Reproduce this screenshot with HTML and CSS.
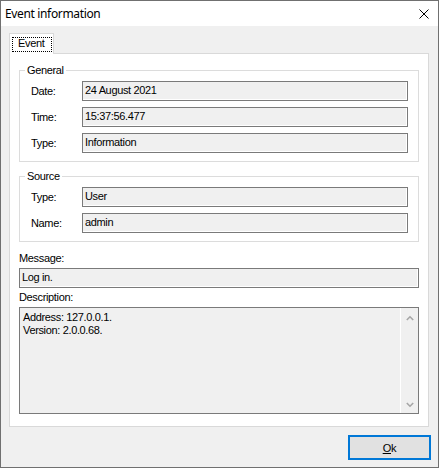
FILE: index.html
```html
<!DOCTYPE html>
<html>
<head>
<meta charset="utf-8">
<title>Event information</title>
<link rel="stylesheet" href="styles.css">
</head>
<body>
<div class="window">
  <div class="titlebar">
    <span class="title">Event information</span>
    <svg class="close" width="10" height="10" viewBox="0 0 10 10"><path d="M0.5 0.5 L9.5 9.5 M9.5 0.5 L0.5 9.5" stroke="#000" stroke-width="1" fill="none"/></svg>
  </div>
  <div class="client">
    <div class="tabs">
      <div class="tab"><span class="tab-label">Event</span></div>
    </div>
    <div class="tabpage">
      <fieldset class="group">
        <legend>General</legend>
        <div class="row"><span class="lbl">Date:</span><div class="field">24 August 2021</div></div>
        <div class="row"><span class="lbl">Time:</span><div class="field">15:37:56.477</div></div>
        <div class="row"><span class="lbl">Type:</span><div class="field">Information</div></div>
      </fieldset>
      <fieldset class="group source">
        <legend>Source</legend>
        <div class="row"><span class="lbl">Type:</span><div class="field">User</div></div>
        <div class="row"><span class="lbl">Name:</span><div class="field">admin</div></div>
      </fieldset>
      <div class="caption first">Message:</div>
      <div class="field wide">Log in.</div>
      <div class="caption">Description:</div>
      <div class="memo">
        <div class="memo-text">Address: 127.0.0.1.<br>Version: 2.0.0.68.</div>
        <div class="vscroll">
          <svg class="arrow" width="8" height="6" viewBox="0 0 8 6"><path d="M0.8 5 L4 1.8 L7.2 5" stroke="#a6a6a6" stroke-width="1.6" fill="none"/></svg>
          <svg class="arrow" width="8" height="6" viewBox="0 0 8 6"><path d="M0.8 1 L4 4.2 L7.2 1" stroke="#a6a6a6" stroke-width="1.6" fill="none"/></svg>
        </div>
      </div>
    </div>
    <div class="footer">
      <button class="btn"><u>O</u>k</button>
    </div>
  </div>
</div>
</body>
</html>
```
FILE: styles.css
```css
html, body {
  margin: 0;
  padding: 0;
  background: #ffffff;
}

body {
  font-family: "Liberation Sans", Arial, sans-serif;
  font-size: 11px;
  color: #000;
}

.window {
  width: 439px;
  height: 468px;
  box-sizing: border-box;
  border: 1px solid #707070;
  display: flex;
  flex-direction: column;
  background: #f0f0f0;
}

.titlebar {
  height: 25px;
  flex: none;
  background: #ffffff;
  display: flex;
  align-items: center;
  padding-left: 4px;
}

.title {
  font-family: "Noto Sans", "Open Sans", sans-serif;
  font-size: 12px;
  line-height: 16px;
  letter-spacing: -0.35px;
  color: #000;
}

.close {
  display: block;
  margin-left: auto;
  margin-right: 9px;
}

.client {
  flex: 1;
  display: flex;
  flex-direction: column;
  align-items: flex-start;
  padding: 7px 7px 0 8px;
  background: #f0f0f0;
}

.tabs {
  display: flex;
  height: 20px;
}

.tab {
  position: relative;
  z-index: 1;
  box-sizing: border-box;
  width: 45px;
  height: 21px;
  border: 1px solid #d9d9d9;
  border-bottom: 0;
  background: #ffffff;
  padding: 3px 0 0 2px;
}

.tab-label {
  display: block;
  box-sizing: border-box;
  width: 40px;
  height: 15px;
  border: 1px dotted #000;
  padding-left: 5px;
  line-height: 11px;
  letter-spacing: -0.35px;
}

.tabpage {
  box-sizing: border-box;
  width: 420px;
  border: 1px solid #d9d9d9;
  background: #ffffff;
  padding: 10px 9px 12px 9px;
  display: flex;
  flex-direction: column;
}

.group {
  margin: 0;
  padding: 4px 10px 8px 0;
  border: 1px solid #dcdcdc;
  display: flex;
  flex-direction: column;
  gap: 6px;
  min-inline-size: 0;
}

.group legend {
  margin-left: 5px;
  padding: 0 2px;
  line-height: 13px;
  letter-spacing: -0.35px;
}

.source {
  margin-top: 8px;
}

.row {
  display: flex;
  align-items: center;
  height: 20px;
}

.lbl {
  width: 51px;
  margin-left: 11px;
  line-height: 13px;
  letter-spacing: -0.35px;
}

.field {
  flex: 1;
  box-sizing: border-box;
  height: 20px;
  border: 1px solid #7a7a7a;
  box-shadow: inset -1px -1px 0 #ffffff;
  background: #f0f0f0;
  padding: 2px 2px 0 2px;
  line-height: 13px;
  letter-spacing: -0.35px;
  white-space: nowrap;
}

.field.wide {
  flex: none;
  width: 400px;
}

.caption {
  line-height: 13px;
  letter-spacing: -0.35px;
  margin-top: 3px;
  margin-bottom: 3px;
}

.caption.first {
  margin-top: 10px;
}

.memo {
  box-sizing: border-box;
  width: 400px;
  height: 107px;
  border: 1px solid #7a7a7a;
  background: #f0f0f0;
  display: flex;
}

.memo-text {
  flex: 1;
  padding: 3px 0 0 3px;
  line-height: 12.5px;
  letter-spacing: -0.35px;
}

.vscroll {
  width: 17px;
  border-left: 1px solid #ffffff;
  display: flex;
  flex-direction: column;
  justify-content: space-between;
  align-items: center;
  padding: 7px 0 5px 0;
}

.arrow {
  display: block;
}

.footer {
  align-self: stretch;
  display: flex;
  justify-content: flex-end;
  padding: 8px 0 0 0;
}

.btn {
  box-sizing: border-box;
  width: 83px;
  height: 25px;
  border: 2px solid #0078d7;
  background: #e1e1e1;
  font-family: "Liberation Sans", Arial, sans-serif;
  font-size: 11px;
  color: #000;
  padding: 0;
  margin: 0;
  letter-spacing: -0.2px;
}
```
